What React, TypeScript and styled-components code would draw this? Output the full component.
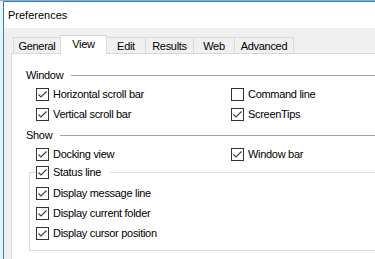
import React from 'react';
import styled, { createGlobalStyle } from 'styled-components';

const GlobalStyle = createGlobalStyle`
  html, body {
    margin: 0;
    padding: 0;
    background: #f2f2f2;
  }
  body {
    font-family: "Liberation Sans", Arial, sans-serif;
    font-size: 11px;
    color: #000;
  }
`;

const Screen = styled.div`
  width: 375px;
  height: 259px;
  overflow: hidden;
  box-sizing: border-box;
  padding-left: 3px;
  border-top: 1px solid #a8a8a8;
  background: #f2f2f2;
`;

const Window = styled.div`
  width: 480px;
  height: 300px;
  border-top: 1px solid #1883d7;
  border-left: 1px solid #1883d7;
  background: #f0f0f0;
`;

const TitleBar = styled.div`
  height: 26px;
  display: flex;
  align-items: center;
  padding-left: 4px;
  background: #fff;
  font-size: 11px;
`;

const Body = styled.div`
  padding: 7px 0 0 7px;
`;

const TabStrip = styled.div`
  display: flex;
  align-items: flex-end;
  height: 18px;
  padding-left: 2px;
  position: relative;
  z-index: 1;
`;

const Tab = styled.div<{ $width: number; $active?: boolean }>`
  box-sizing: border-box;
  width: ${(p) => p.$width}px;
  height: ${(p) => (p.$active ? 19 : 16)}px;
  margin-bottom: ${(p) => (p.$active ? -1 : 0)}px;
  margin-left: -1px;
  display: flex;
  align-items: center;
  justify-content: center;
  padding-bottom: ${(p) => (p.$active ? 3 : 0)}px;
  border: 1px solid #d9d9d9;
  border-bottom: none;
  background: ${(p) => (p.$active ? '#fff' : '#f0f0f0')};
  position: relative;
  z-index: ${(p) => (p.$active ? 2 : 1)};
  letter-spacing: -0.3px;

  &:first-child {
    margin-left: 0;
  }
`;

const Panel = styled.div`
  width: 420px;
  height: 260px;
  background: #fff;
  border: 1px solid #d9d9d9;
  padding: 13px 0 0 14px;
  letter-spacing: -0.3px;
`;

const Section = styled.div<{ $gap?: number }>`
  margin-top: ${(p) => p.$gap ?? 0}px;
`;

const GroupHeader = styled.div`
  display: flex;
  align-items: center;
  height: 16px;
`;

const Rule = styled.div<{ $light?: boolean }>`
  flex: 1;
  height: 1px;
  margin-left: 8px;
  background: ${(p) => (p.$light ? '#dcdcdc' : '#a0a0a0')};
`;

const Grid = styled.div`
  display: grid;
  grid-template-columns: 195px auto;
  padding-left: 10px;
  margin-top: 1px;
`;

const Row = styled.label`
  display: flex;
  align-items: center;
  gap: 4px;
  height: 20px;
  white-space: nowrap;
`;

const StatusGroup = styled.fieldset`
  margin: -2px 0 0 3px;
  padding: 1px 0 7px 6px;
  border: 1px solid #dcdcdc;
  min-inline-size: 0;
`;

const Legend = styled.legend`
  padding: 0 9px 0 0;
`;

const Box = styled.svg`
  flex: none;
  width: 13px;
  height: 13px;
`;

const CheckBox = ({ checked }: { checked?: boolean }) => (
  <Box viewBox="0 0 13 13">
    <rect x="0.5" y="0.5" width="12" height="12" fill="#fff" stroke="#333" />
    {checked && (
      <polyline points="2.5,6.5 5,9 10.5,3.5" fill="none" stroke="#3c3c3c" strokeWidth="1.1" />
    )}
  </Box>
);

const Check = ({ label, checked = true }: { label: string; checked?: boolean }) => (
  <Row>
    <CheckBox checked={checked} />
    <span>{label}</span>
  </Row>
);

const tabs = [
  { name: 'General', width: 48 },
  { name: 'View', width: 47, active: true },
  { name: 'Edit', width: 40 },
  { name: 'Results', width: 49 },
  { name: 'Web', width: 42 },
  { name: 'Advanced', width: 60 },
];

export default function App() {
  return (
    <>
      <GlobalStyle />
      <Screen>
        <Window>
          <TitleBar>Preferences</TitleBar>
          <Body>
            <TabStrip>
              {tabs.map((t) => (
                <Tab key={t.name} $width={t.width} $active={t.active}>
                  {t.name}
                </Tab>
              ))}
            </TabStrip>
            <Panel>
              <Section>
                <GroupHeader>
                  Window
                  <Rule />
                </GroupHeader>
                <Grid>
                  <Check label="Horizontal scroll bar" />
                  <Check label="Command line" checked={false} />
                  <Check label="Vertical scroll bar" />
                  <Check label="ScreenTips" />
                </Grid>
              </Section>
              <Section $gap={3}>
                <GroupHeader>
                  Show
                  <Rule />
                </GroupHeader>
                <Grid>
                  <Check label="Docking view" />
                  <Check label="Window bar" />
                </Grid>
                <StatusGroup>
                  <Legend>
                    <Check label="Status line" />
                  </Legend>
                  <Check label="Display message line" />
                  <Check label="Display current folder" />
                  <Check label="Display cursor position" />
                </StatusGroup>
              </Section>
            </Panel>
          </Body>
        </Window>
      </Screen>
    </>
  );
}
